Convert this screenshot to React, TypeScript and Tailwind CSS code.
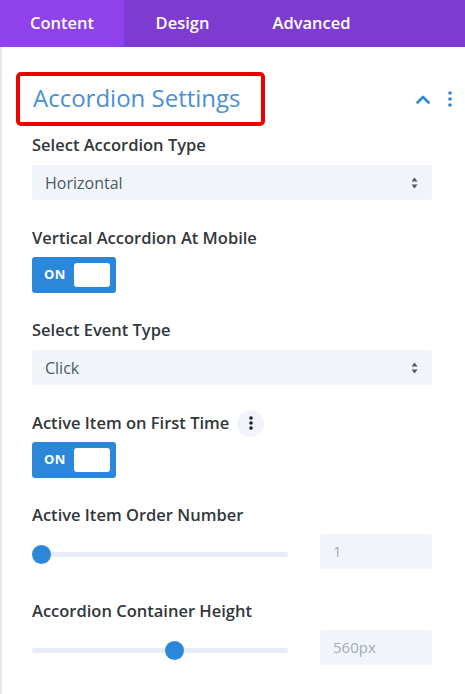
import React from "react";

const font = { fontFamily: '"Open Sans", "Noto Sans", sans-serif' };

function Label({ children }: { children: React.ReactNode }) {
  return (
    <div className="h-5 flex items-center text-[16.5px] leading-5 font-semibold text-[#32373c] whitespace-nowrap">
      {children}
    </div>
  );
}

function Select({ value }: { value: string }) {
  return (
    <div className="mt-[10px] h-[35px] w-[400px] bg-[#f1f5f9] rounded-[3px] flex items-center justify-between pl-[13px] pr-[14px]">
      <span className="text-[16px] text-[#4c5866]">{value}</span>
      <svg width="7" height="12" viewBox="0 0 7 12">
        <path d="M3.5 0.5 L6.5 4.5 H0.5 Z" fill="#4c5866" />
        <path d="M3.5 11.5 L6.5 7.5 H0.5 Z" fill="#4c5866" />
      </svg>
    </div>
  );
}

function Toggle() {
  return (
    <div className="mt-[9px] h-9 w-[84px] bg-[#2b87da] rounded-[3px] flex items-center justify-between pl-3 pr-[6px]">
      <span className="text-[13px] font-bold text-white tracking-wide">ON</span>
      <div className="h-6 w-9 bg-white rounded-[3px]" />
    </div>
  );
}

function Slider({ value, pos }: { value: string; pos: number }) {
  return (
    <div className="mt-[9px] flex items-center w-[400px] justify-between">
      <div className="relative w-[256px] h-[5px] mt-[6px] bg-[#e7edf4] rounded-full">
        <div
          className="absolute top-1/2 w-[19px] h-[19px] -mt-[9.5px] -ml-[9.5px] rounded-full bg-[#2b87da]"
          style={{ left: pos }}
        />
      </div>
      <div className="h-[35px] w-[112px] bg-[#f1f5f9] rounded-[3px] flex items-center pl-[13px] text-[15px] text-[#a3acb6]">
        {value}
      </div>
    </div>
  );
}

export default function App() {
  return (
    <div className="w-[465px] h-[694px] bg-white overflow-hidden flex flex-col" style={font}>
      <div className="h-[47px] bg-[#7e3bd0] flex text-white text-[16.5px] font-semibold">
        <div className="w-[124px] bg-[#8f42ec] flex items-center justify-center">Content</div>
        <div className="w-[117px] flex items-center justify-center">Design</div>
        <div className="w-[141px] flex items-center justify-center">Advanced</div>
      </div>
      <div className="flex-1 border-l-2 border-[#e6e6e6] pl-[30px] pr-[33px]">
        <div className="mt-[25px] -ml-[16px] flex items-center justify-between">
          <div className="h-[54px] w-[249px] border-4 border-[#ee0000] rounded-[5px] flex items-center pl-[13px]">
            <span className="text-[24px] text-[#4a90d4] leading-none -mt-[2px] whitespace-nowrap">Accordion Settings</span>
          </div>
          <div className="flex items-center gap-[18px] -mr-[20px]">
            <svg width="14" height="9" viewBox="0 0 14 9">
              <path d="M1.5 7.5 L7 2 L12.5 7.5" stroke="#2b87da" strokeWidth="2.6" fill="none" strokeLinecap="round" strokeLinejoin="round" />
            </svg>
            <svg width="4" height="16" viewBox="0 0 4 16">
              <circle cx="2" cy="2" r="1.8" fill="#2b87da" />
              <circle cx="2" cy="8" r="1.8" fill="#2b87da" />
              <circle cx="2" cy="14" r="1.8" fill="#2b87da" />
            </svg>
          </div>
        </div>

        <div className="mt-[9px]">
          <Label>Select Accordion Type</Label>
          <Select value="Horizontal" />
        </div>

        <div className="mt-[28px]">
          <Label>Vertical Accordion At Mobile</Label>
          <Toggle />
        </div>

        <div className="mt-[27px]">
          <Label>Select Event Type</Label>
          <Select value="Click" />
        </div>

        <div className="mt-[28px]">
          <Label>
            Active Item on First Time
            <span className="ml-[8px] w-[27px] h-[27px] rounded-full bg-[#f1f5f9] flex items-center justify-center shrink-0">
              <svg width="4" height="14" viewBox="0 0 4 14">
                <circle cx="2" cy="2" r="1.8" fill="#1f2328" />
                <circle cx="2" cy="7" r="1.8" fill="#1f2328" />
                <circle cx="2" cy="12" r="1.8" fill="#1f2328" />
              </svg>
            </span>
          </Label>
          <Toggle />
        </div>

        <div className="mt-[27px]">
          <Label>Active Item Order Number</Label>
          <Slider value="1" pos={9} />
        </div>

        <div className="mt-[32px]">
          <Label>Accordion Container Height</Label>
          <Slider value="560px" pos={142} />
        </div>
      </div>
    </div>
  );
}
